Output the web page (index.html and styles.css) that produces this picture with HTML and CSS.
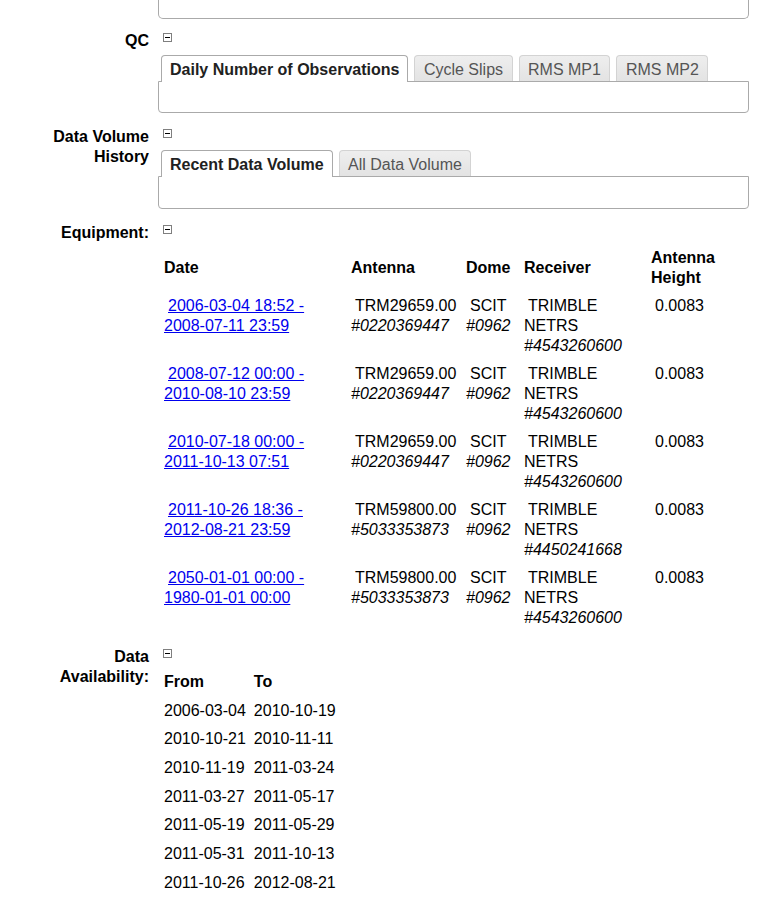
FILE: index.html
```html
<!DOCTYPE html>
<html>
<head>
<meta charset="utf-8">
<link rel="stylesheet" href="styles.css">
</head>
<body>
<div class="page">
  <div class="row">
    <div class="label"></div>
    <div class="content"><div class="top-box"></div></div>
  </div>

  <div class="row">
    <div class="label">QC</div>
    <div class="content">
      <span class="toggle"></span>
      <div class="tabs">
        <ul class="tab-nav">
          <li class="tab active">Daily Number of Observations</li>
          <li class="tab">Cycle Slips</li>
          <li class="tab">RMS MP1</li>
          <li class="tab">RMS MP2</li>
        </ul>
        <div class="tab-panel"></div>
      </div>
    </div>
  </div>

  <div class="row">
    <div class="label">Data Volume History</div>
    <div class="content">
      <span class="toggle"></span>
      <div class="tabs tabs-tight">
        <ul class="tab-nav">
          <li class="tab active">Recent Data Volume</li>
          <li class="tab">All Data Volume</li>
        </ul>
        <div class="tab-panel"></div>
      </div>
    </div>
  </div>

  <div class="row">
    <div class="label">Equipment:</div>
    <div class="content">
      <span class="toggle"></span>
      <table class="equip">
        <thead>
          <tr>
            <th class="c-date">Date</th>
            <th class="c-ant">Antenna</th>
            <th class="c-dome">Dome</th>
            <th class="c-rec">Receiver</th>
            <th class="c-h">Antenna Height</th>
          </tr>
        </thead>
        <tbody>
          <tr>
            <td><a href="#">2006-03-04 18:52 - 2008-07-11 23:59</a></td>
            <td>TRM29659.00 <i>#0220369447</i></td>
            <td>SCIT <i>#0962</i></td>
            <td>TRIMBLE NETRS <i>#4543260600</i></td>
            <td>0.0083</td>
          </tr>
          <tr>
            <td><a href="#">2008-07-12 00:00 - 2010-08-10 23:59</a></td>
            <td>TRM29659.00 <i>#0220369447</i></td>
            <td>SCIT <i>#0962</i></td>
            <td>TRIMBLE NETRS <i>#4543260600</i></td>
            <td>0.0083</td>
          </tr>
          <tr>
            <td><a href="#">2010-07-18 00:00 - 2011-10-13 07:51</a></td>
            <td>TRM29659.00 <i>#0220369447</i></td>
            <td>SCIT <i>#0962</i></td>
            <td>TRIMBLE NETRS <i>#4543260600</i></td>
            <td>0.0083</td>
          </tr>
          <tr>
            <td><a href="#">2011-10-26 18:36 - 2012-08-21 23:59</a></td>
            <td>TRM59800.00 <i>#5033353873</i></td>
            <td>SCIT <i>#0962</i></td>
            <td>TRIMBLE NETRS <i>#4450241668</i></td>
            <td>0.0083</td>
          </tr>
          <tr>
            <td><a href="#">2050-01-01 00:00 - 1980-01-01 00:00</a></td>
            <td>TRM59800.00 <i>#5033353873</i></td>
            <td>SCIT <i>#0962</i></td>
            <td>TRIMBLE NETRS <i>#4543260600</i></td>
            <td>0.0083</td>
          </tr>
        </tbody>
      </table>
    </div>
  </div>

  <div class="row">
    <div class="label">Data Availability:</div>
    <div class="content">
      <span class="toggle"></span>
      <table class="avail">
        <thead>
          <tr><th>From</th><th>To</th></tr>
        </thead>
        <tbody>
          <tr><td>2006-03-04</td><td>2010-10-19</td></tr>
          <tr><td>2010-10-21</td><td>2010-11-11</td></tr>
          <tr><td>2010-11-19</td><td>2011-03-24</td></tr>
          <tr><td>2011-03-27</td><td>2011-05-17</td></tr>
          <tr><td>2011-05-19</td><td>2011-05-29</td></tr>
          <tr><td>2011-05-31</td><td>2011-10-13</td></tr>
          <tr><td>2011-10-26</td><td>2012-08-21</td></tr>
        </tbody>
      </table>
    </div>
  </div>
</div>
</body>
</html>
```
FILE: styles.css
```css
html, body {
  margin: 0;
  padding: 0;
  background: #fff;
}
body {
  font-family: "Liberation Sans", Arial, sans-serif;
  font-size: 16px;
  line-height: 20px;
  color: #000;
}
.page {
  display: flex;
  flex-direction: column;
  gap: 14px;
  padding: 0 13px 0 39px;
}
.page > .row:first-child {
  margin-bottom: -2px;
}
.row {
  display: grid;
  grid-template-columns: 110px 1fr;
  column-gap: 9px;
  align-items: start;
}
.label {
  font-weight: bold;
  text-align: right;
}
.content {
  min-width: 0;
}
.top-box {
  height: 18px;
  border: 1px solid #aaa;
  border-top: none;
  border-radius: 0 0 5px 5px;
}
.toggle {
  display: block;
  position: relative;
  width: 7px;
  height: 7px;
  border: 1px solid #7f7f7f;
  margin: 2px 0 0 5px;
  background: #fff;
}
.toggle::after {
  content: "";
  position: absolute;
  left: 1px;
  top: 3px;
  width: 5px;
  height: 1px;
  background: #000;
}
.tabs {
  margin-top: 13px;
}
.tabs.tabs-tight {
  margin-top: 12px;
}
.tabs-tight .tab-panel {
  height: 31px;
}
.tab-nav {
  list-style: none;
  margin: 0;
  padding: 0 0 0 3px;
  display: flex;
  gap: 6px;
  align-items: flex-end;
  position: relative;
  z-index: 1;
}
.tab {
  border: 1px solid #d3d3d3;
  border-bottom: none;
  border-radius: 4px 4px 0 0;
  padding: 4px 8.5px 1px;
  background: linear-gradient(#eeeeee, #e3e3e3);
  color: #555;
  white-space: nowrap;
}
.tab.active {
  background: #fff;
  border-color: #aaa;
  color: #212121;
  font-weight: bold;
  padding: 4px 8px 2px;
  margin-bottom: -1px;
}
.tab-panel {
  height: 30px;
  border: 1px solid #aaa;
  border-radius: 0 0 4px 4px;
  background: #fff;
}
table {
  border-collapse: separate;
  border-spacing: 2px;
  margin: 9px 0 0 1px;
  font-size: 16px;
}
th {
  font-weight: bold;
  text-align: left;
}
.equip {
  table-layout: fixed;
  width: 587px;
}
.equip th, .equip td {
  padding: 3px;
  box-sizing: border-box;
}
.equip th {
  vertical-align: middle;
}
.equip td {
  vertical-align: top;
  text-indent: 4px;
}
.c-date { width: 185px; }
.c-ant { width: 113px; }
.c-dome { width: 56px; }
.c-rec { width: 125px; }
.c-h { width: 96px; }
.equip a {
  color: #0000ee;
  text-decoration: underline;
}
.avail th, .avail td {
  padding: 3.33px 3px;
  vertical-align: top;
}
.avail {
  margin-top: 8.7px;
}
```
